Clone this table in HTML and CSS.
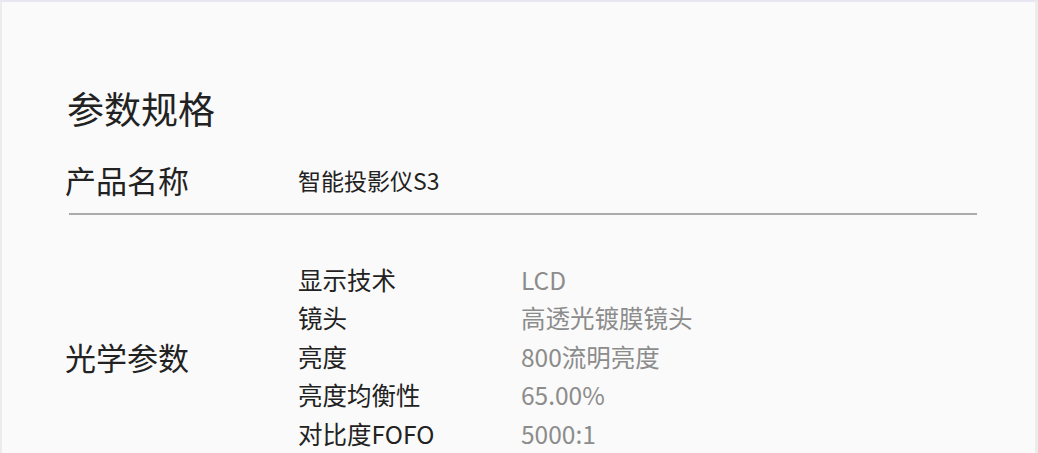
FILE: index.html
```html
<!DOCTYPE html>
<html lang="zh-CN">
  <head>
    <meta charset="UTF-8" />
    <meta name="viewport" content="width=device-width, initial-scale=1.0" />
    <title>参数规格</title>
    <link rel="stylesheet" href="styles.css">
  </head>
  <body>
    <div class="container">
      <h1>参数规格</h1>

      <div class="spec-row">
        <div class="spec-name">产品名称</div>
        <div class="spec-single">智能投影仪S3</div>
      </div>

      <hr class="divider" />

      <div class="spec-row group">
        <div class="spec-name">光学参数</div>
        <ul class="spec-list">
          <li><span class="key">显示技术</span><span class="value">LCD</span></li>
          <li><span class="key">镜头</span><span class="value">高透光镀膜镜头</span></li>
          <li><span class="key">亮度</span><span class="value">800流明亮度</span></li>
          <li><span class="key">亮度均衡性</span><span class="value">65.00%</span></li>
          <li><span class="key">对比度FOFO</span><span class="value">5000:1</span></li>
        </ul>
      </div>
    </div>
  </body>
</html>
```

FILE: styles.css
```css
* {
  margin: 0;
  padding: 0;
  box-sizing: border-box;
}

body {
  font-family: "Noto Sans CJK SC", "Noto Sans", sans-serif;
  background: #fafafa;
  color: #222;
  height: 453px;
  overflow: hidden;
  border-top: 2px solid #e7e7f1;
  border-left: 2px solid #ececec;
  border-right: 3px solid #ececec;
}

.container {
  padding: 84px 0 0 63px;
  width: 975px;
}

h1 {
  font-size: 37px;
  font-weight: 400;
  line-height: 44px;
  margin-left: 2px;
}

.spec-row {
  display: flex;
  align-items: center;
  margin-top: 30px;
}

.spec-name {
  width: 233px;
  font-size: 31px;
  line-height: 40px;
}

.spec-single {
  font-size: 23px;
  line-height: 40px;
}

.divider {
  border: none;
  height: 2px;
  background: #ababab;
  margin: 13px 0 0 4px;
}

.group {
  margin-top: 46px;
}

.spec-list {
  list-style: none;
}

.spec-list li {
  display: flex;
  font-size: 24.5px;
  line-height: 38.4px;
}

.key {
  width: 223px;
}

.value {
  color: #8c8c8c;
}
```
